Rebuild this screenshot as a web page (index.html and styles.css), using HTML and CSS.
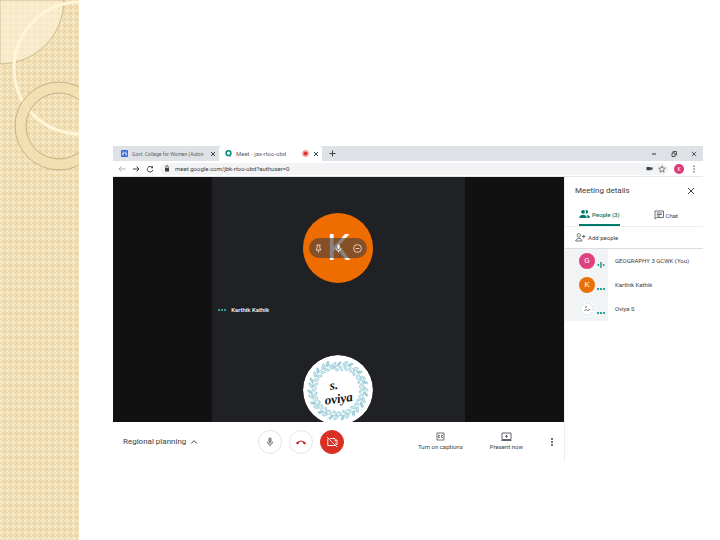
FILE: index.html
```
<!DOCTYPE html>
<html lang="en">
<head>
<meta charset="UTF-8">
<title>Meet</title>
<link rel="stylesheet" href="styles.css">
</head>
<body>
<div class="slide">
    <div class="ornament">
        <svg width="79" height="180" viewBox="0 0 79 180" fill="none">
            <path d="M0 0H64A64 64 0 0 1 0 64Z" fill="#fdf3dc" fill-opacity=".6" stroke="#cdb98c"/>
            <circle cx="80" cy="68" r="66" stroke="#fff6d8" stroke-width="3"/>
            <circle cx="59" cy="126" r="38" stroke="#f3dfb0" stroke-width="11" stroke-opacity=".8"/>
            <circle cx="59" cy="126" r="44" stroke="#c5b184"/>
            <circle cx="59" cy="126" r="33" stroke="#c5b184"/>
        </svg>
    </div>
    <div class="page">
        <div class="browser">
            <div class="tabs">
                <div class="tab">
                    <svg width="7" height="7" viewBox="0 0 7 7"><rect width="7" height="7" rx="1" fill="#3367d6"/><path d="M1.300 2h1.500v1.500H1.300V5h1.700M5.700 2H4.200v1.500h1.500V5H4.200" fill="none" stroke="#fff" stroke-width=".7"/></svg>
                    <span class="tab-title tab-title-long">Govt. College for Women (Auton</span>
                    <button class="tab-close" aria-label="Close tab"><svg width="6" height="6" viewBox="0 0 6 6"><path d="M1 1l4 4M5 1L1 5" stroke="#3c4043"/></svg></button>
                </div>
                <div class="tab tab-active">
                    <svg width="7" height="7" viewBox="0 0 7 7"><path d="M4.500 6l.5 1 1-2z" fill="#00796b"/><circle cx="3.500" cy="3.200" r="2.400" fill="none" stroke="#00897b" stroke-width="1.500"/></svg>
                    <span class="tab-title">Meet - jax-rtoo-ubd</span>
                    <svg width="7" height="7" viewBox="0 0 7 7"><circle cx="3.500" cy="3.500" r="2.900" fill="#f3b1ad" stroke="#e8746c" stroke-width=".8"/><circle cx="3.500" cy="3.500" r="1.800" fill="#d93025"/></svg>
                    <button class="tab-close" aria-label="Close tab"><svg width="6" height="6" viewBox="0 0 6 6"><path d="M1 1l4 4M5 1L1 5" stroke="#3c4043"/></svg></button>
                </div>
                <button class="new-tab" aria-label="New tab"><svg width="7" height="7" viewBox="0 0 7 7"><path d="M3.500 .5v6M.5 3.500h6" stroke="#3c4043"/></svg></button>
                <div class="window-buttons">
                    <button aria-label="Minimize"><svg width="6" height="6" viewBox="0 0 6 6"><path d="M1 3h4" stroke="#333"/></svg></button>
                    <button aria-label="Restore"><svg width="6" height="6" viewBox="0 0 6 6"><path d="M1 2h3v3.500H1zM2 2V.5h3.500V4H4" fill="none" stroke="#333" stroke-width=".8"/></svg></button>
                    <button aria-label="Close"><svg width="6" height="6" viewBox="0 0 6 6"><path d="M.8 .8l4.400 4.400M5.200 .8L.8 5.200" stroke="#333" stroke-width=".8"/></svg></button>
                </div>
            </div>
            <div class="toolbar">
                <button aria-label="Back"><svg width="8" height="8" viewBox="0 0 8 8"><path d="M7.500 4H1M3.500 1.500L1 4l2.500 2.500" fill="none" stroke="#9aa0a6" stroke-width=".8"/></svg></button>
                <button aria-label="Forward"><svg width="8" height="8" viewBox="0 0 8 8"><path d="M1 4h6M4.500 1.500L7 4 4.500 6.500" fill="none" stroke="#3c4043"/></svg></button>
                <button aria-label="Reload"><svg width="8" height="8" viewBox="0 0 8 8"><path d="M6.300 2.500A2.800 2.800 0 1 0 6.800 5" fill="none" stroke="#3c4043"/><path d="M7 .8v2.500H4.500z" fill="#3c4043"/></svg></button>
                <div class="address">
                    <svg width="6" height="7" viewBox="0 0 6 7"><rect x="1" y="3" width="4" height="3.500" fill="#3c4043"/><path d="M1.800 3V1.800a1.200 1.200 0 0 1 2.400 0V3" fill="none" stroke="#3c4043" stroke-width=".8"/></svg>
                    <input class="url" type="text" aria-label="Address" value="meet.google.com/jbk-rtoo-ubd?authuser=0">
                    <svg width="7" height="7" viewBox="0 0 7 7"><path d="M.5 2h4v1l2-1v3.200l-2-1v1h-4z" fill="#3c4043"/></svg>
                    <svg width="8" height="8" viewBox="0 0 8 8"><path d="M4 .8l.9 2.200 2.400.2-1.800 1.600.5 2.400-2-1.300-2 1.300.5-2.400L.7 3.200l2.400-.2z" fill="none" stroke="#5f6368" stroke-width=".8"/></svg>
                </div>
                <span class="profile">K</span>
                <button aria-label="Menu"><svg width="8" height="8" viewBox="0 0 8 8" fill="#3c4043"><circle cx="4" cy="1.300" r=".7"/><circle cx="4" cy="4" r=".7"/><circle cx="4" cy="6.700" r=".7"/></svg></button>
            </div>
            <div class="meeting">
                <div class="call">
                    <div class="stage">
                        <div class="tiles">
                            <div class="avatar avatar-k">
                                K
                                <div class="hover-tools">
                                    <button aria-label="Pin"><svg width="9" height="9" viewBox="0 0 9 9" fill="none" stroke="#f2dccb" stroke-width=".9"><path d="M2.500 1h4M3.200 1v3L2 6h5L5.800 4V1M4.500 6v2.600"/></svg></button>
                                    <button aria-label="Mute"><svg width="9" height="9" viewBox="0 0 9 9"><rect x="3.500" y=".5" width="2" height="4.500" rx="1" fill="#fff"/><path d="M2 4.200a2.500 2.500 0 0 0 5 0M4.500 6.800v1.700" fill="none" stroke="#fff" stroke-width=".8"/></svg></button>
                                    <button aria-label="Remove"><svg width="9" height="9" viewBox="0 0 9 9" fill="none" stroke="#f2dccb" stroke-width=".9"><circle cx="4.500" cy="4.500" r="3.900"/><path d="M2.500 4.500h4"/></svg></button>
                                </div>
                            </div>
                            <div class="caption"><span class="dots"></span>Karthik Kathik</div>
                            <svg class="avatar" viewBox="0 0 70 70">
                                <defs>
                                    <g id="sprig" fill="none" stroke="#8fc6d3" stroke-width=".7">
                                        <path d="M30 10q5-3 10 0"/>
                                        <ellipse cx="31" cy="7.500" rx="2.800" ry="1.100" transform="rotate(-50 31 7.500)" fill="#d3ecf1"/>
                                        <ellipse cx="36" cy="7" rx="2.800" ry="1.100" transform="rotate(-50 36 7)" fill="#a9d6df"/>
                                        <ellipse cx="33" cy="12" rx="2.800" ry="1" transform="rotate(40 33 12)" fill="#d3ecf1"/>
                                        <ellipse cx="38" cy="12" rx="2.400" ry="1" transform="rotate(40 38 12)" fill="#e4f4f7"/>
                                    </g>
                                </defs>
                                <circle cx="35" cy="35" r="35" fill="#fff"/>
                                <use href="#sprig" transform="translate(0 2)"/>
                                <use href="#sprig" transform="rotate(24 35 35)"/>
                                <use href="#sprig" transform="rotate(48 35 35)"/>
                                <use href="#sprig" transform="rotate(72 35 35)"/>
                                <use href="#sprig" transform="rotate(96 35 35)"/>
                                <use href="#sprig" transform="rotate(120 35 35)"/>
                                <use href="#sprig" transform="rotate(144 35 35)"/>
                                <use href="#sprig" transform="rotate(168 35 35)"/>
                                <use href="#sprig" transform="rotate(192 35 35)"/>
                                <use href="#sprig" transform="rotate(216 35 35)"/>
                                <use href="#sprig" transform="rotate(240 35 35)"/>
                                <use href="#sprig" transform="rotate(264 35 35)"/>
                                <use href="#sprig" transform="rotate(288 35 35)"/>
                                <use href="#sprig" transform="rotate(312 35 35)"/>
                                <use href="#sprig" transform="rotate(336 35 35)"/>
                                <g class="script" transform="rotate(-8 35 40)">
                                    <text x="28" y="34">s.</text>
                                    <text x="21" y="48">oviya</text>
                                </g>
                            </svg>
                        </div>
                    </div>
                    <div class="controls">
                        <button class="meeting-name">Regional planning
                            <svg width="8" height="8" viewBox="0 0 8 8"><path d="M1.200 5.500L4 2.700l2.800 2.800" fill="none" stroke="#3c4043"/></svg>
                        </button>
                        <div class="call-buttons">
                            <button class="round" aria-label="Microphone"><svg width="10" height="10" viewBox="0 0 10 10"><rect x="3.900" y=".8" width="2.200" height="5" rx="1.100" fill="#9aa0a6" stroke="#5f6368" stroke-width=".7"/><path d="M2.300 4.700a2.700 2.700 0 0 0 5.400 0M5 7.500v1.900" fill="none" stroke="#5f6368" stroke-width=".9"/></svg></button>
                            <button class="round" aria-label="Leave call"><svg width="12" height="12" viewBox="0 0 12 12"><path d="M.8 6.900Q6 1.900 11.200 6.900L9.500 8.400 7.900 7.200V5.900Q6 5.200 4.100 5.900v1.300L2.500 8.400z" fill="#c5221f"/></svg></button>
                            <button class="round round-off" aria-label="Camera"><svg width="12" height="12" viewBox="0 0 12 12" fill="none" stroke="#fff" stroke-width=".9"><path d="M4 2.500h5v2.800l2-1.500v5l-2-1.500M1.800 3v6.500H9M1 1l10 10"/></svg></button>
                        </div>
                        <div class="actions">
                            <button class="action"><svg width="9" height="9" viewBox="0 0 9 9" fill="none" stroke="#5f6368" stroke-width=".9"><path d="M1 1h7v7H1zM4 3.500H2.500v2H4M7 3.500H5.500v2H7"/></svg>Turn on captions</button>
                            <button class="action"><svg width="11" height="9" viewBox="0 0 11 9" fill="none" stroke="#5f6368"><path d="M1 1h9v6.500H1zM.5 8.500h10M5.500 2.800v3M4 4.300h3"/></svg>Present now</button>
                            <button class="more" aria-label="More options"><svg width="4" height="10" viewBox="0 0 4 10" fill="#3c4043"><circle cx="2" cy="2" r="1"/><circle cx="2" cy="5" r="1"/><circle cx="2" cy="8" r="1"/></svg></button>
                        </div>
                    </div>
                </div>
                <div class="details">
                    <div class="details-head">
                        <span>Meeting details</span>
                        <button aria-label="Close panel"><svg width="8" height="8" viewBox="0 0 8 8"><path d="M1 1l6 6M7 1L1 7" stroke="#3c4043"/></svg></button>
                    </div>
                    <div class="details-tabs">
                        <button class="details-tab selected"><svg width="11" height="10" viewBox="0 0 11 10" fill="#00796b"><circle cx="4" cy="2.800" r="1.900"/><path d="M6.600 1a1.900 1.900 0 1 1 0 3.600Q7.500 2.800 6.600 1zM.5 9V7.500Q1.500 5.700 4 5.700t3.500 1.800V9zM8.300 9V7.200L7.700 5.900Q10 6.200 10.700 7.600V9z"/></svg>People (3)</button>
                        <button class="details-tab"><svg width="10" height="10" viewBox="0 0 10 10" fill="none" stroke="#5f6368" stroke-width=".9"><path d="M1 1h8.500v6.500H2.800L1 9zM2.800 3h5M2.800 4.500h5M2.800 6h3.500"/></svg>Chat</button>
                    </div>
                    <button class="add"><svg width="11" height="9" viewBox="0 0 11 9" fill="none" stroke="#5f6368" stroke-width=".9"><circle cx="3.800" cy="2.400" r="1.700"/><path d="M.8 8V7q1-1.600 3-1.600t3 1.600v1zM7 3.500h3.500M8.800 1.800v3.500"/></svg>Add people</button>
                    <ul class="people">
                        <li><span class="side"><span class="face face-pink">G</span><svg class="voice" width="8" height="8" viewBox="0 0 8 8" stroke="#1aa38c" stroke-width="1.500"><path d="M1.300 3v2M4 1v6M6.700 3v2"/></svg></span><span class="person">GEOGRAPHY 3 GCWK (You)</span></li>
                        <li><span class="side"><span class="face face-orange">K</span><span class="dots"></span></span><span class="person">Karthik Kathik</span></li>
                        <li><span class="side"><svg class="face" viewBox="0 0 16 16"><circle cx="8" cy="8" r="8" fill="#fff"/><circle cx="8" cy="8" r="6.300" fill="none" stroke="#a9d6df" stroke-dasharray="2 1"/><path d="M6 6h2M5.500 9.500l2-1 1 1 2.500-1" fill="none" stroke="#555" stroke-width=".9"/></svg><span class="dots"></span></span><span class="person">Oviya S</span></li>
                    </ul>
                </div>
            </div>
        </div>
    </div>
</div>
</body>
</html>
```
FILE: styles.css
```
* {
    box-sizing: border-box;
}
body {
    margin: 0;
    background: #fff;
    font-family: Roboto, "Liberation Sans", sans-serif;
    color: #3c4043;
}
button {
    display: flex;
    align-items: center;
    padding: 0;
    border: none;
    background: none;
    font: inherit;
    color: inherit;
    cursor: pointer;
}
svg {
    display: block;
    flex: none;
}
.slide {
    display: flex;
    min-height: 100vh;
}
/* woven paper strip */
.ornament {
    flex: none;
    width: 79px;
    background-color: #f6e4bc;
    background-image:
        conic-gradient(rgba(211, 180, 120, 0.2) 25%, transparent 0 50%, rgba(211, 180, 120, 0.2) 0 75%, transparent 0),
        conic-gradient(rgba(205, 175, 120, 0.2) 25%, transparent 0 50%, rgba(255, 250, 225, 0.4) 0 75%, transparent 0);
    background-size: 4px 4px, 6px 6px;
}
.page {
    flex: 1;
    min-width: 0;
    padding: 146px 17px 20px 34px;
}
.tabs {
    display: flex;
    align-items: center;
    height: 15px;
    background: #dee1e6;
    font-size: 6px;
    color: #5f6368;
}
.tab {
    display: flex;
    align-items: center;
    gap: 4px;
    width: 106px;
    height: 15px;
    padding: 0 3px 0 8px;
}
.tab-active {
    width: 103px;
    padding-left: 6px;
    background: #fff;
    border-radius: 3px 3px 0 0;
}
.tab-title {
    flex: 1;
    white-space: nowrap;
}
.tab-title-long {
    font-size: 5px;
}
.new-tab {
    margin-left: 7px;
}
.window-buttons {
    display: flex;
    gap: 14px;
    margin-left: auto;
    padding-right: 6px;
}
.toolbar {
    display: flex;
    align-items: center;
    gap: 6px;
    height: 16px;
    padding: 0 5px;
    border-bottom: 1px solid #e4e6e9;
}
.address {
    display: flex;
    flex: 1;
    align-items: center;
    gap: 5px;
    height: 12px;
    padding: 0 2px 0 4px;
    border-radius: 6px;
    background: #f1f3f4;
}
.url {
    flex: 1;
    min-width: 0;
    padding: 0;
    border: none;
    outline: none;
    background: none;
    font: 6px Roboto, "Liberation Sans", sans-serif;
    color: #3c4043;
}
.profile {
    width: 10px;
    border-radius: 50%;
    background: #db3b7c;
    font-size: 5px;
    line-height: 10px;
    text-align: center;
    color: #fff;
}
.meeting {
    display: flex;
}
.call {
    flex: 1;
    min-width: 0;
    border-right: 1px solid #eceef0;
}
.stage {
    display: flex;
    justify-content: center;
    height: 245px;
    overflow: hidden;
    background: #111;
}
.tiles {
    display: flex;
    flex-direction: column;
    align-items: center;
    width: 56%;
    padding-top: 36px;
    background: #202124;
}
.avatar {
    flex: none;
    width: 70px;
    height: 70px;
    border-radius: 50%;
}
.avatar-k {
    position: relative;
    background: #ef6c00;
    font-size: 37px;
    line-height: 70px;
    text-align: center;
    color: #fff;
}
.hover-tools {
    position: absolute;
    top: 25px;
    left: 6px;
    right: 6px;
    display: flex;
    justify-content: space-between;
    height: 20px;
    padding: 0 5px;
    border-radius: 10px;
    background: rgba(75, 65, 60, 0.65);
}
.caption {
    display: flex;
    align-items: center;
    align-self: stretch;
    gap: 5px;
    margin: 22px 0 40px;
    padding-left: 6px;
    font-size: 6px;
    line-height: 10px;
    font-weight: 500;
    color: #fff;
}
.dots {
    width: 8px;
    height: 2px;
    background: repeating-linear-gradient(to right, #26a69a 0 2px, transparent 2px 3px);
}
.script {
    font-family: "Liberation Serif", serif;
    font-size: 13px;
    font-style: italic;
    font-weight: bold;
    fill: #111;
}
.controls {
    display: grid;
    grid-template-columns: 1fr auto 1fr;
    align-items: center;
    height: 39px;
    padding: 0 10px;
    background: #fff;
}
.meeting-name {
    gap: 4px;
    font-size: 8px;
}
.call-buttons {
    display: flex;
    gap: 7px;
    margin-right: 74px;
}
.round {
    justify-content: center;
    width: 24px;
    height: 24px;
    border: 1px solid #e2e4e7;
    border-radius: 50%;
}
.round-off {
    border-color: #d93025;
    background: #d93025;
}
.actions {
    display: flex;
    align-items: center;
    justify-content: flex-end;
}
.action {
    flex-direction: column;
    gap: 2px;
    margin-right: 27px;
    font-size: 6px;
    line-height: 8px;
    white-space: nowrap;
}
.details {
    width: 138px;
    font-size: 6px;
}
.details-head {
    display: flex;
    align-items: center;
    justify-content: space-between;
    height: 27px;
    padding: 0 8px 0 10px;
    font-size: 8px;
}
.details-tabs {
    display: flex;
    height: 23px;
    padding: 0 14px;
    border-bottom: 1px solid #eceef0;
}
.details-tab {
    gap: 2px;
    height: 22px;
    margin-right: 34px;
    white-space: nowrap;
}
.details-tab:last-child {
    margin-right: 0;
}
.selected {
    border-bottom: 2px solid #00796b;
    color: #00796b;
    font-weight: 500;
}
.add {
    gap: 2px;
    width: 100%;
    height: 22px;
    padding-left: 10px;
    border-bottom: 1px solid #dadce0;
}
.people {
    margin: 0;
    padding: 0;
    list-style: none;
}
.people li {
    display: flex;
    height: 24px;
}
.side {
    display: flex;
    align-items: center;
    gap: 2px;
    width: 43px;
    padding-left: 14px;
    background: #f1f3f4;
}
.side .dots,
.voice {
    margin-top: 8px;
}
.face {
    width: 16px;
    height: 16px;
    border-radius: 50%;
    font-size: 8px;
    line-height: 16px;
    text-align: center;
    color: #fff;
}
.face-pink {
    background: #e0407f;
}
.face-orange {
    background: #e8710a;
}
.person {
    padding-left: 7px;
    line-height: 24px;
    white-space: nowrap;
}
```
